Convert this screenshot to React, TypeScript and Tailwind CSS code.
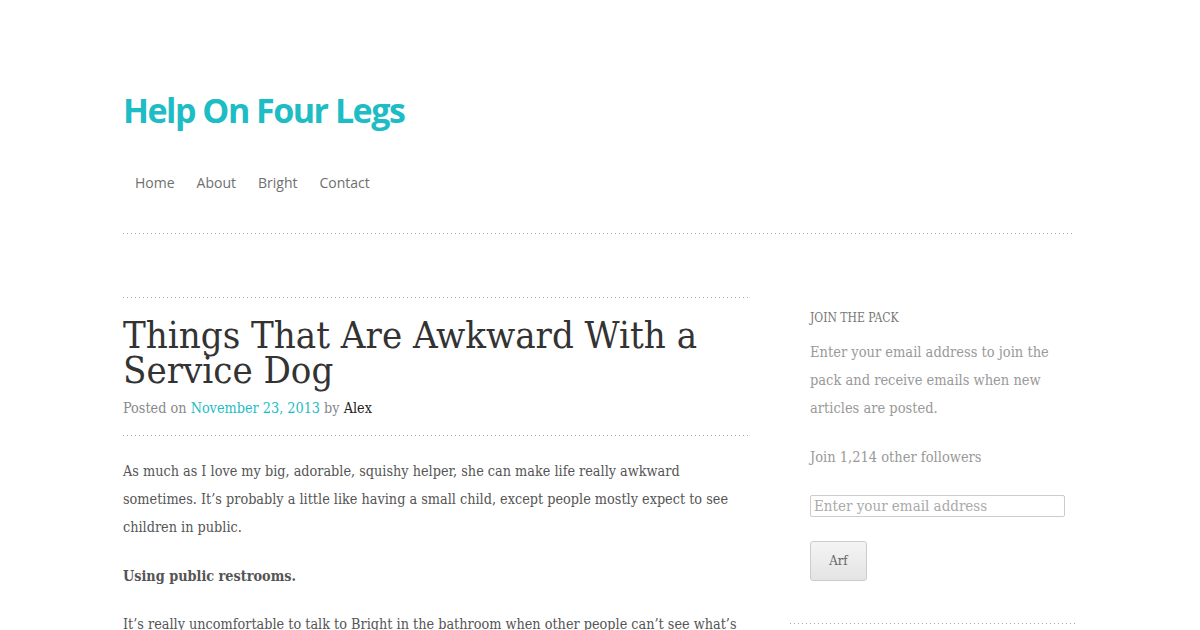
const Dots = ({ className = "" }: { className?: string }) => (
  <div
    className={`h-px bg-[linear-gradient(to_right,#a8a8a8_1px,transparent_1px)] bg-[length:4px_1px] ${className}`}
  />
);

export default function App() {
  const serif = { fontFamily: '"DejaVu Serif Condensed", "DejaVu Serif", serif' };
  return (
    <div className="w-[1200px] h-[630px] overflow-hidden bg-white">
      <div className="w-[954px] ml-[123px]">
        <header className="pt-[88px]">
          <h1
            className="text-[34px] font-bold tracking-[-1.5px] text-[#1ebcc4] leading-[44px]"
            style={{ fontFamily: '"Open Sans", sans-serif' }}
          >
            Help On Four Legs
          </h1>
          <nav
            className="flex gap-[22px] pl-3 mt-[40px] text-[14px] text-[#6f6f6f]"
            style={{ fontFamily: '"Open Sans", sans-serif' }}
          >
            <span>Home</span>
            <span>About</span>
            <span>Bright</span>
            <span>Contact</span>
          </nav>
          <Dots className="mt-[40px] w-[952px]" />
        </header>

        <div className="flex mt-[63px]" style={serif}>
          <main className="w-[627px]">
            <Dots />
            <h2 className="mt-[20px] text-[38px] leading-[35px] text-[#333]">
              Things That Are Awkward With a Service Dog
            </h2>
            <p className="mt-[10px] text-[14.3px] text-[#888]">
              Posted on <span className="text-[#1ebcc4]">November 23, 2013</span> by{" "}
              <span className="text-[#222]">Alex</span>
            </p>
            <Dots className="mt-[16px]" />
            <div className="mt-[21px] text-[14.3px] leading-[28px] text-[#555]">
              <p>
                As much as I love my big, adorable, squishy helper, she can make life really awkward
                sometimes. It’s probably a little like having a small child, except people mostly expect
                to see children in public.
              </p>
              <p className="mt-[21px] font-bold">Using public restrooms.</p>
              <p className="mt-[20px]">
                It’s really uncomfortable to talk to Bright in the bathroom when other people can’t see
                what’s going on.
              </p>
            </div>
          </main>

          <aside className="ml-[40px] w-[287px]">
            <div className="pl-5 pt-[12px]">
              <h3 className="text-[12px] text-[#777] uppercase">Join the Pack</h3>
              <p className="mt-[11px] text-[14.5px] leading-[28px] text-[#999] w-[250px]">
                Enter your email address to join the pack and receive emails when new articles are posted.
              </p>
              <p className="mt-[21px] text-[14.5px] leading-[28px] text-[#999]">Join 1,214 other followers</p>
              <input
                className="mt-[24px] block w-[255px] h-[22px] border border-[#ccc] rounded-[2px] px-[3px] text-[15px] text-[#999] placeholder:text-[#aaa] outline-none"
                placeholder="Enter your email address"
                style={serif}
              />
              <button
                className="mt-[24px] w-[57px] h-[40px] border border-[#ccc] rounded-[3px] bg-gradient-to-b from-[#f4f4f4] to-[#e4e4e4] text-[13px] text-[#666]"
                style={serif}
              >
                Arf
              </button>
            </div>
            <Dots className="mt-[42px]" />
          </aside>
        </div>
      </div>
    </div>
  );
}
